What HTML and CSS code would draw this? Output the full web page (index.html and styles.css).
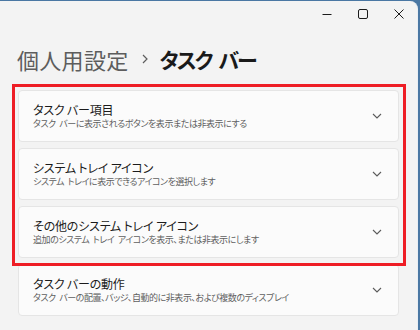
FILE: index.html
```html
<!DOCTYPE html>
<html lang="ja">
<head>
<meta charset="utf-8">
<link rel="stylesheet" href="styles.css">
</head>
<body>
<div class="window">
  <div class="titlebar">
    <div class="ctl"><svg width="10" height="10" viewBox="0 0 10 10"><path d="M0.5 5.5h9" stroke="#1b1b1b" stroke-width="1"/></svg></div>
    <div class="ctl"><svg width="10" height="10" viewBox="0 0 10 10"><rect x="0.5" y="0.5" width="9" height="9" rx="1.5" fill="none" stroke="#1b1b1b" stroke-width="1"/></svg></div>
    <div class="ctl"><svg width="10" height="10" viewBox="0 0 10 10"><path d="M0.5 0.5l9 9M9.5 0.5l-9 9" stroke="#1b1b1b" stroke-width="1"/></svg></div>
  </div>
  <h1 class="crumbs"><span class="parent">個人用設定</span><span class="sep"><svg width="6" height="10" viewBox="0 0 6 10"><path d="M1 1l4 4-4 4" fill="none" stroke="#5d5d5d" stroke-width="1.2"/></svg></span><span class="current">タスク バー</span></h1>
  <div class="list">
    <div class="card">
      <div class="text"><div class="title">タスク バー項目</div><div class="sub">タスク バーに表示されるボタンを表示または非表示にする</div></div>
      <svg class="chev" width="10" height="6" viewBox="0 0 10 6"><path d="M1 1l4 4 4-4" fill="none" stroke="#5c5c5c" stroke-width="1.1"/></svg>
    </div>
    <div class="card">
      <div class="text"><div class="title">システム トレイ アイコン</div><div class="sub">システム トレイに表示できるアイコンを選択します</div></div>
      <svg class="chev" width="10" height="6" viewBox="0 0 10 6"><path d="M1 1l4 4 4-4" fill="none" stroke="#5c5c5c" stroke-width="1.1"/></svg>
    </div>
    <div class="card">
      <div class="text"><div class="title">その他のシステム トレイ アイコン</div><div class="sub">追加のシステム トレイ アイコンを表示、または非表示にします</div></div>
      <svg class="chev" width="10" height="6" viewBox="0 0 10 6"><path d="M1 1l4 4 4-4" fill="none" stroke="#5c5c5c" stroke-width="1.1"/></svg>
    </div>
    <div class="card">
      <div class="text"><div class="title">タスク バーの動作</div><div class="sub">タスク バーの配置、バッジ、自動的に非表示、および複数のディスプレイ</div></div>
      <svg class="chev" width="10" height="6" viewBox="0 0 10 6"><path d="M1 1l4 4 4-4" fill="none" stroke="#5c5c5c" stroke-width="1.1"/></svg>
    </div>
  </div>
  <div class="highlight"></div>
</div>
</body>
</html>
```

FILE: styles.css
```css
* { box-sizing: border-box; }
html, body { margin: 0; padding: 0; }
body {
  width: 420px;
  height: 330px;
  overflow: hidden;
  background: #4a77a3;
  font-family: "Noto Sans CJK JP", "Noto Sans", sans-serif;
  font-feature-settings: "palt";
}
.window {
  position: relative;
  margin-top: 1px;
  width: 418px;
  height: 329px;
  background: #f3f3f3;
  border-top-right-radius: 8px;
  border-right: 1px solid #e9eef3;
  overflow: hidden;
}
.titlebar {
  display: flex;
  justify-content: flex-end;
  height: 26px;
}
.ctl {
  width: 36px;
  display: flex;
  align-items: center;
  justify-content: center;
}
.crumbs {
  margin: 0;
  padding: 14px 0 0 17px;
  height: 63px;
  display: flex;
  align-items: flex-start;
  font-size: 22px;
  line-height: 36px;
  font-weight: 400;
}
.parent { color: #5d5d5d; letter-spacing: 0.3px; }
.sep { display: flex; align-items: center; height: 36px; padding: 0 12px 0 13px; }
.current { color: #1a1a1a; font-weight: 600; font-size: 21px; letter-spacing: -1.9px; word-spacing: 4px; }
.list {
  display: flex;
  flex-direction: column;
  gap: 6px;
  padding-left: 18px;
  width: 399px;
}
.card {
  height: 52px;
  background: #fbfbfb;
  border: 1px solid #e5e5e5;
  border-radius: 4px;
  display: flex;
  align-items: center;
  padding: 0 16px 0 14px;
}
.text { flex: 1; min-width: 0; }
.title {
  font-size: 12px;
  line-height: 15px;
  color: #1b1b1b;
  white-space: nowrap;
  letter-spacing: -0.2px;
}
.sub {
  font-size: 9px;
  line-height: 14px;
  color: #5f5f5f;
  white-space: nowrap;
  letter-spacing: -0.45px;
  word-spacing: 2px;
}
.chev { flex: none; }
.highlight {
  position: absolute;
  left: 12px;
  top: 83px;
  width: 394px;
  height: 182px;
  border: 3px solid #ee1d25;
}
```
